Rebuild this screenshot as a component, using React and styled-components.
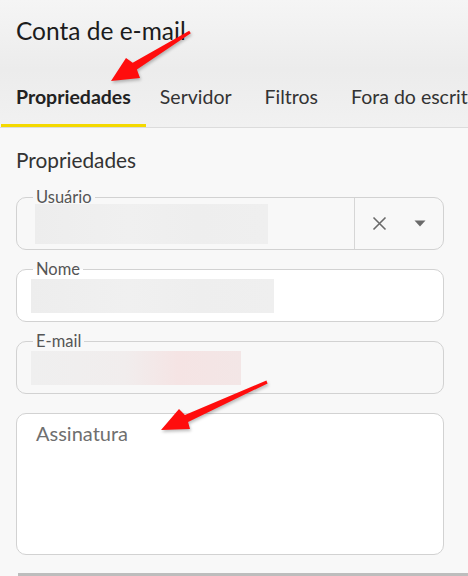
import React from "react";
import styled, { createGlobalStyle } from "styled-components";

const Global = createGlobalStyle`
  html, body { margin: 0; padding: 0; background: #f8f8f8; }
  body { font-family: Lato, "Noto Sans", sans-serif; }
  * { box-sizing: border-box; }
`;

const Page = styled.div`
  position: relative;
  width: 468px;
  height: 576px;
  overflow: hidden;
  background: #f8f8f8;
`;

const Header = styled.header`
  height: 128px;
  padding-top: 16px;
  background: linear-gradient(#f5f5f5 0%, #ececec 55%, #f1f1f1 100%);
  border-bottom: 1px solid #dcdcdc;
  display: flex;
  flex-direction: column;
`;

const Title = styled.h1`
  margin: 0 0 0 16px;
  font-size: 24.5px;
  line-height: 29px;
  font-weight: 400;
  color: #1c1c1c;
`;

const TabBar = styled.nav`
  margin-top: auto;
  display: flex;
  padding-left: 1px;
  white-space: nowrap;
`;

const Tab = styled.div`
  flex-shrink: 0;
  height: 47px;
  padding: 0 15px 10px;
  line-height: 34px;
  font-size: 19.5px;
  font-weight: ${(p) => (p.$active ? 700 : 400)};
  color: ${(p) => (p.$active ? "#222" : "#333")};
  border-bottom: 3px solid ${(p) => (p.$active ? "#f4d900" : "transparent")};
  margin-right: ${(p) => (p.$active ? "-1px" : "3px")};
`;

const Content = styled.main`
  padding: 20px 24px 0 16px;
  display: flex;
  flex-direction: column;
`;

const Heading = styled.h2`
  margin: 0 0 25px;
  font-size: 20.8px;
  line-height: 24px;
  font-weight: 400;
  color: #333;
`;

const Fields = styled.div`
  display: flex;
  flex-direction: column;
  gap: 19px;
`;

const Field = styled.div`
  position: relative;
  display: flex;
  align-items: ${(p) => (p.$multiline ? "flex-start" : "center")};
  height: ${(p) => (p.$multiline ? "142px" : "53px")};
  padding-left: ${(p) => p.$pad || "14px"};
  border: 1px solid #d2d2d2;
  border-radius: 10px;
  background: ${(p) => p.$bg || "#f8f8f8"};
`;

const Label = styled.span`
  position: absolute;
  top: -11px;
  left: 16px;
  padding: 0 3px;
  font-size: 16.5px;
  line-height: 20px;
  color: #555;
  background: linear-gradient(#f8f8f8 50%, ${(p) => p.$bg || "#f8f8f8"} 50%);
`;

const Redacted = styled.div`
  width: ${(p) => p.$w}px;
  height: ${(p) => p.$h}px;
  background: ${(p) =>
    p.$tint
      ? "linear-gradient(90deg, #efefef 0%, #f1eded 45%, #f5e4e4 70%, #f3e6e6 100%)"
      : "linear-gradient(90deg, #ededed 0%, #f0f0f0 40%, #eeeeee 70%, #efefef 100%)"};
  filter: blur(0.6px);
`;

const Adornments = styled.div`
  margin-left: auto;
  align-self: stretch;
  width: 89px;
  border-left: 1px solid #d6d6d6;
  display: flex;
  align-items: center;
  justify-content: space-between;
  padding: 0 17px 0 17px;
`;

const IconButton = styled.span`
  display: flex;
  align-items: center;
  justify-content: center;
  color: #6a6a6a;
`;

const Placeholder = styled.span`
  margin-top: 7px;
  font-size: 20px;
  line-height: 24px;
  color: #6f6f6f;
`;

const Scrollbar = styled.div`
  margin: 18px 0 0 18px;
  height: 3px;
  background: #bdbdbd;
`;

const Overlay = styled.svg`
  position: absolute;
  left: 0;
  top: 0;
  pointer-events: none;
  filter: drop-shadow(1px 2px 1.5px rgba(0, 0, 0, 0.25));
`;

const tabs = ["Propriedades", "Servidor", "Filtros", "Fora do escritório"];

export default function App() {
  return (
    <Page>
      <Global />
      <Header>
        <Title>Conta de e-mail</Title>
        <TabBar>
          {tabs.map((t, i) => (
            <Tab key={t} $active={i === 0}>
              {t}
            </Tab>
          ))}
        </TabBar>
      </Header>
      <Content>
        <Heading>Propriedades</Heading>
        <Fields>
          <Field $pad="18px">
            <Label>Usuário</Label>
            <Redacted $w={233} $h={40} />
            <Adornments>
              <IconButton>
                <svg width="15" height="15" viewBox="0 0 15 15">
                  <path d="M1.5 1.5 L13.5 13.5 M13.5 1.5 L1.5 13.5" stroke="currentColor" strokeWidth="1.6" />
                </svg>
              </IconButton>
              <IconButton>
                <svg width="12" height="7" viewBox="0 0 12 7">
                  <path d="M0.5 0.5 L11.5 0.5 L6 6.5 Z" fill="currentColor" />
                </svg>
              </IconButton>
            </Adornments>
          </Field>
          <Field $bg="#ffffff">
            <Label $bg="#ffffff">Nome</Label>
            <Redacted $w={243} $h={34} />
          </Field>
          <Field>
            <Label>E-mail</Label>
            <Redacted $w={210} $h={34} $tint />
          </Field>
          <Field $bg="#ffffff" $multiline $pad="19px">
            <Placeholder>Assinatura</Placeholder>
          </Field>
        </Fields>
      </Content>
      <Scrollbar />
      <Overlay width="468" height="576" viewBox="0 0 468 576">
        <polygon
          points="111,81 140,78 136.9,69.6 190.8,33.3 189.2,30.7 132.7,62.8 126,58"
          fill="#ff0d0d"
        />
        <polygon
          points="161,430 190,429 188.1,422.1 267.6,383.4 266.4,380.6 184.9,414.9 179,409"
          fill="#ff0d0d"
        />
      </Overlay>
    </Page>
  );
}
